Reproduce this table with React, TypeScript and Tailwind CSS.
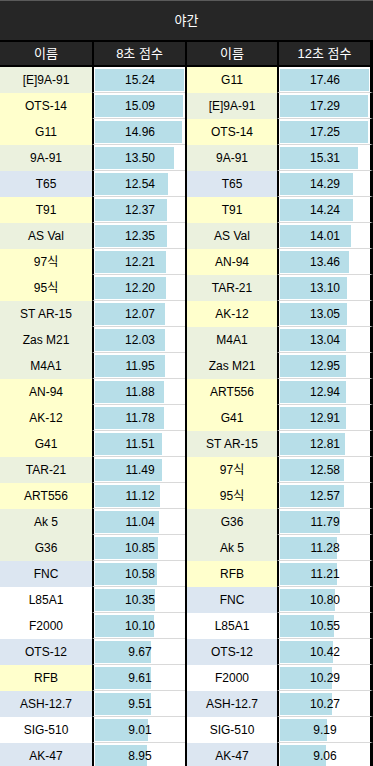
import React from 'react';

type Row = [string, number];

const fills: Record<string, string> = {
  '[E]9A-91': 'g', 'OTS-14': 'y', G11: 'y', '9A-91': 'g', T65: 'b', T91: 'y', 'AS Val': 'g',
  '97식': 'y', '95식': 'y', 'ST AR-15': 'g', 'Zas M21': 'g', M4A1: 'g', 'AN-94': 'y', 'AK-12': 'y',
  G41: 'y', 'TAR-21': 'g', ART556: 'y', 'Ak 5': 'g', G36: 'g', FNC: 'b', L85A1: 'w', F2000: 'w',
  'OTS-12': 'b', RFB: 'y', 'ASH-12.7': 'b', 'SIG-510': 'w', 'AK-47': 'b',
};

const fillClass: Record<string, string> = {
  y: 'bg-[#ffffcc]',
  g: 'bg-[#ebf1de]',
  b: 'bg-[#dce6f1]',
  w: 'bg-white',
};

const eight: Row[] = [
  ['[E]9A-91', 15.24], ['OTS-14', 15.09], ['G11', 14.96], ['9A-91', 13.5], ['T65', 12.54],
  ['T91', 12.37], ['AS Val', 12.35], ['97식', 12.21], ['95식', 12.2], ['ST AR-15', 12.07],
  ['Zas M21', 12.03], ['M4A1', 11.95], ['AN-94', 11.88], ['AK-12', 11.78], ['G41', 11.51],
  ['TAR-21', 11.49], ['ART556', 11.12], ['Ak 5', 11.04], ['G36', 10.85], ['FNC', 10.58],
  ['L85A1', 10.35], ['F2000', 10.1], ['OTS-12', 9.67], ['RFB', 9.61], ['ASH-12.7', 9.51],
  ['SIG-510', 9.01], ['AK-47', 8.95],
];

const twelve: Row[] = [
  ['G11', 17.46], ['[E]9A-91', 17.29], ['OTS-14', 17.25], ['9A-91', 15.31], ['T65', 14.29],
  ['T91', 14.24], ['AS Val', 14.01], ['AN-94', 13.46], ['TAR-21', 13.1], ['AK-12', 13.05],
  ['M4A1', 13.04], ['Zas M21', 12.95], ['ART556', 12.94], ['G41', 12.91], ['ST AR-15', 12.81],
  ['97식', 12.58], ['95식', 12.57], ['G36', 11.79], ['Ak 5', 11.28], ['RFB', 11.21],
  ['FNC', 10.8], ['L85A1', 10.55], ['OTS-12', 10.42], ['F2000', 10.29], ['ASH-12.7', 10.27],
  ['SIG-510', 9.19], ['AK-47', 9.06],
];

const max8 = eight[0][1];
const max12 = twelve[0][1];
const BAR_MAX = 89;

function NameCell({ name, className = '' }: { name: string; className?: string }) {
  return (
    <div className={`h-[26px] flex items-center justify-center ${fillClass[fills[name]]} ${className}`}>
      {name}
    </div>
  );
}

function BarCell({ value, max, className = '' }: { value: number; max: number; className?: string }) {
  return (
    <div className={`h-[26px] border-l-2 border-l-black border-b border-b-[#d9d9d9] pl-[1px] pt-[2px] pb-[1px] grid ${className}`}>
      <div
        className="col-start-1 row-start-1 h-full bg-[#b7dee8]"
        style={{ width: Math.round((value / max) * BAR_MAX) }}
      />
      <div className="col-start-1 row-start-1 self-center text-center">{value.toFixed(2)}</div>
    </div>
  );
}

export default function App() {
  return (
    <div
      className="w-[373px] h-[766px] overflow-hidden bg-white text-[12px] text-black"
      style={{ fontFamily: '"Liberation Sans", "Noto Sans CJK KR", sans-serif' }}
    >
      {/* title */}
      <div className="h-[40px] bg-[#262626] border-t border-t-[#5a5a5a] flex items-center justify-center text-white text-[13px]">
        야간
      </div>

      {/* header */}
      <div className="flex h-[27px] bg-[#262626] border-y-2 border-black text-white text-[13px]">
        <div className="w-[92px] flex items-center justify-center">이름</div>
        <div className="w-[93px] border-l-2 border-black flex items-center justify-center">8초 점수</div>
        <div className="w-[92px] border-l-2 border-black flex items-center justify-center">이름</div>
        <div className="w-[96px] border-x-2 border-r-[3px] border-black flex items-center justify-center">12초 점수</div>
      </div>

      {/* rows */}
      {eight.map((left, i) => {
        const right = twelve[i];
        return (
          <div key={i} className="flex">
            <NameCell name={left[0]} className="w-[92px]" />
            <BarCell value={left[1]} max={max8} className="w-[93px]" />
            <NameCell name={right[0]} className="w-[92px] border-l-2 border-black" />
            <BarCell value={right[1]} max={max12} className="w-[96px] border-r-[3px] border-r-black" />
          </div>
        );
      })}
    </div>
  );
}
